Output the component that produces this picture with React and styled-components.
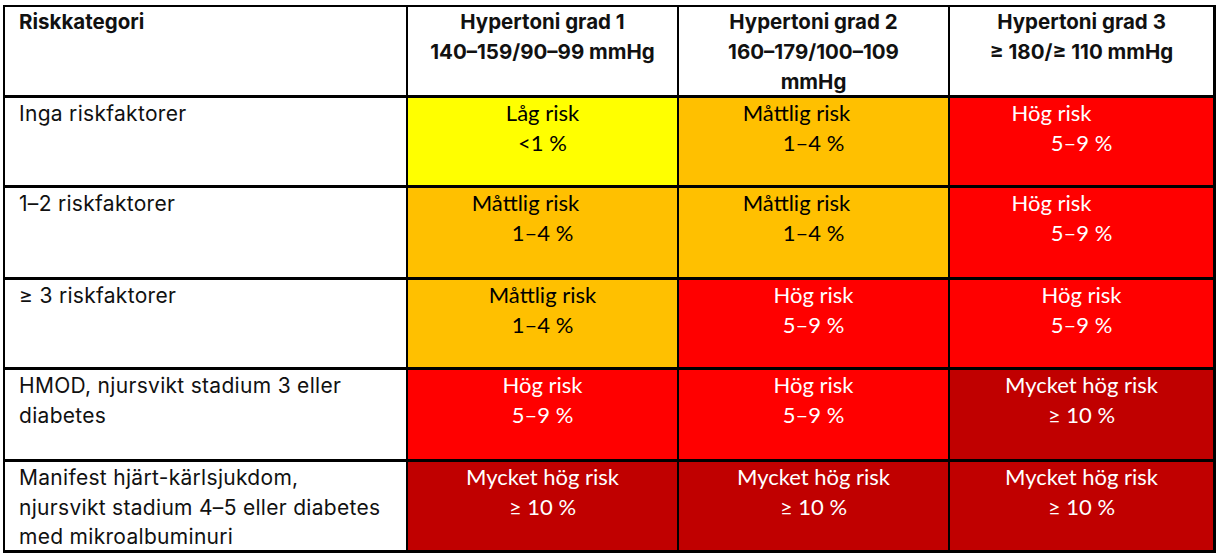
import React from "react"
import styled, { createGlobalStyle } from "styled-components"

const GlobalStyle = createGlobalStyle`
  body {
    margin: 0;
    background: #ffffff;
  }
`

const colors = {
  low: "#ffff00",
  moderate: "#ffc000",
  high: "#ff0000",
  veryHigh: "#c00000",
}

const Page = styled.div`
  padding: 5px 0 0 3px;
`

const Table = styled.div`
  display: grid;
  grid-template-columns: 401px 269px 269px 263px;
  grid-template-rows: 88px 87px 89px 87px 89px 88px;
  gap: 3px 2px;
  width: max-content;
  padding: 2px 3px 3px 2px;
  background: #000000;
`

const Cell = styled.div`
  background: #ffffff;
  line-height: 30px;
  padding-top: 0;
`

const HeaderCell = styled(Cell)`
  font-family: Inter, "Liberation Sans", sans-serif;
  font-weight: 700;
  font-size: 20.5px;
  color: #111111;
  line-height: 30px;
  text-align: ${(p) => (p.$left ? "left" : "center")};
  padding-left: ${(p) => (p.$left ? "14px" : "0")};
`

const LabelCell = styled(Cell)`
  font-family: Inter, "Liberation Sans", sans-serif;
  font-size: 21px;
  letter-spacing: 0.3px;
  color: #111111;
  padding: 1px 6px 0 14px;
  line-height: 29.5px;
`

const RiskCell = styled(Cell)`
  font-family: Lato, "Liberation Sans", sans-serif;
  font-size: 22px;
  text-align: center;
  background: ${(p) => colors[p.$level]};
  color: ${(p) =>
    p.$level === "low" || p.$level === "moderate" ? "#000000" : "#ffffff"};
`

const Line = styled.div`
  padding-right: ${(p) => (p.$shift ? p.$shift * 2 : 0)}px;
  white-space: nowrap;
`

const risk = {
  low: ["Låg risk", "<1 %"],
  moderate: ["Måttlig risk", "1–4 %"],
  high: ["Hög risk", "5–9 %"],
  veryHigh: ["Mycket hög risk", "≥ 10 %"],
}

const rows = [
  {
    label: ["Inga riskfaktorer"],
    cells: [
      { level: "low" },
      { level: "moderate", shift: 17 },
      { level: "high", shift: 30 },
    ],
  },
  {
    label: ["1–2 riskfaktorer"],
    cells: [
      { level: "moderate", shift: 17 },
      { level: "moderate", shift: 17 },
      { level: "high", shift: 30 },
    ],
  },
  {
    label: ["≥ 3 riskfaktorer"],
    cells: [{ level: "moderate" }, { level: "high" }, { level: "high" }],
  },
  {
    label: ["HMOD, njursvikt stadium 3 eller", "diabetes"],
    cells: [{ level: "high" }, { level: "high" }, { level: "veryHigh" }],
  },
  {
    label: [
      "Manifest hjärt-kärlsjukdom,",
      "njursvikt stadium 4–5 eller diabetes",
      "med mikroalbuminuri",
    ],
    cells: [{ level: "veryHigh" }, { level: "veryHigh" }, { level: "veryHigh" }],
  },
]

const headers = [
  ["Hypertoni grad 1", "140–159/90–99 mmHg"],
  ["Hypertoni grad 2", "160–179/100–109", "mmHg"],
  ["Hypertoni grad 3", "≥ 180/≥ 110 mmHg"],
]

const App = () => (
  <Page>
    <GlobalStyle />
    <Table>
      <HeaderCell $left>Riskkategori</HeaderCell>
      {headers.map((lines, i) => (
        <HeaderCell key={i}>
          {lines.map((l) => (
            <Line key={l}>{l}</Line>
          ))}
        </HeaderCell>
      ))}

      {rows.map((row, r) => (
        <React.Fragment key={r}>
          <LabelCell>
            {row.label.map((l) => (
              <Line key={l}>{l}</Line>
            ))}
          </LabelCell>
          {row.cells.map((c, i) => (
            <RiskCell key={i} $level={c.level}>
              <Line $shift={c.shift}>{risk[c.level][0]}</Line>
              <Line>{risk[c.level][1]}</Line>
            </RiskCell>
          ))}
        </React.Fragment>
      ))}
    </Table>
  </Page>
)

export default App
